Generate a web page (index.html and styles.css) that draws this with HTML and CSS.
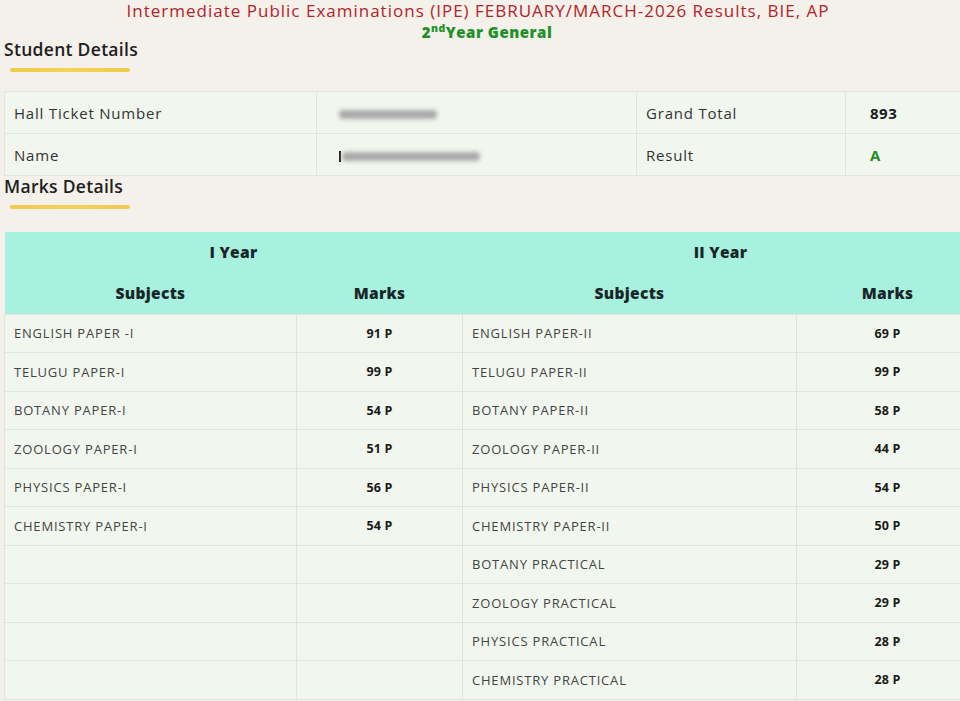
FILE: index.html
```html
<!DOCTYPE html>
<html>
<head>
<meta charset="utf-8">
<link rel="stylesheet" href="styles.css">
</head>
<body>
<div class="page">
  <div class="title">Intermediate Public Examinations (IPE) FEBRUARY/MARCH-2026 Results, BIE, AP</div>
  <div class="subtitle"><span class="ord">2<span class="sup">nd</span></span>Year General</div>

  <h2 class="section">Student Details</h2>
  <div class="underline"></div>
  <table class="details">
    <colgroup><col class="c1"><col class="c2"><col class="c3"><col class="c4"></colgroup>
    <tr>
      <td>Hall Ticket Number</td>
      <td class="val"><span class="blur b1"></span></td>
      <td>Grand Total</td>
      <td class="val strong">893</td>
    </tr>
    <tr>
      <td>Name</td>
      <td class="val"><span class="cursor"></span><span class="blur b2"></span></td>
      <td>Result</td>
      <td class="val strong pass">A</td>
    </tr>
  </table>

  <h2 class="section section2">Marks Details</h2>
  <div class="underline"></div>
  <table class="marks">
    <colgroup><col class="m1"><col class="m2"><col class="m3"><col class="m4"></colgroup>
    <thead>
      <tr class="h1"><th colspan="2">I Year</th><th colspan="2">II Year</th></tr>
      <tr class="h2"><th>Subjects</th><th>Marks</th><th>Subjects</th><th>Marks</th></tr>
    </thead>
    <tbody>
      <tr><td>ENGLISH PAPER -I</td><td class="mk">91 P</td><td>ENGLISH PAPER-II</td><td class="mk">69 P</td></tr>
      <tr><td>TELUGU PAPER-I</td><td class="mk">99 P</td><td>TELUGU PAPER-II</td><td class="mk">99 P</td></tr>
      <tr><td>BOTANY PAPER-I</td><td class="mk">54 P</td><td>BOTANY PAPER-II</td><td class="mk">58 P</td></tr>
      <tr><td>ZOOLOGY PAPER-I</td><td class="mk">51 P</td><td>ZOOLOGY PAPER-II</td><td class="mk">44 P</td></tr>
      <tr><td>PHYSICS PAPER-I</td><td class="mk">56 P</td><td>PHYSICS PAPER-II</td><td class="mk">54 P</td></tr>
      <tr><td>CHEMISTRY PAPER-I</td><td class="mk">54 P</td><td>CHEMISTRY PAPER-II</td><td class="mk">50 P</td></tr>
      <tr><td></td><td></td><td>BOTANY PRACTICAL</td><td class="mk">29 P</td></tr>
      <tr><td></td><td></td><td>ZOOLOGY PRACTICAL</td><td class="mk">29 P</td></tr>
      <tr><td></td><td></td><td>PHYSICS PRACTICAL</td><td class="mk">28 P</td></tr>
      <tr><td></td><td></td><td>CHEMISTRY PRACTICAL</td><td class="mk">28 P</td></tr>
    </tbody>
  </table>
</div>
</body>
</html>
```

FILE: styles.css
```css
html, body {
  margin: 0;
  padding: 0;
  background: #f4f0ea;
  overflow: hidden;
}
body {
  font-family: "Open Sans", "Liberation Sans", sans-serif;
  color: #222;
}
.page {
  width: 1000px;
  padding: 0 0 0 4px;
}
.title {
  width: 948px;
  text-align: center;
  color: #b3232b;
  font-size: 17px;
  letter-spacing: 1px;
  line-height: 18px;
  padding-top: 2px;
  white-space: nowrap;
}
.subtitle {
  width: 966px;
  text-align: center;
  color: #22902a;
  font-weight: 800;
  font-size: 15px;
  line-height: 16px;
  letter-spacing: 0.5px;
  padding-top: 4px;
}
.ord {
  display: inline-flex;
  align-items: flex-start;
}
.sup {
  font-size: 10.5px;
  line-height: 11px;
  margin-top: -1px;
  font-weight: 800;
}
.section {
  margin: 0;
  font-size: 17.5px;
  letter-spacing: 0.3px;
  font-weight: 600;
  color: #1e1e1e;
  line-height: 20px;
}
.section:first-of-type {
  margin-top: -1px;
}
.underline {
  width: 120px;
  height: 4px;
  margin: 9px 0 0 6px;
  border-radius: 3px;
  background: linear-gradient(90deg, #f2c94c 0%, #f6d15a 50%, #f2c94c 100%);
}
table {
  border-collapse: collapse;
  table-layout: fixed;
  background: #f1f7ee;
}
.details {
  width: 1000px;
  margin-top: 19px;
}
.details td {
  border: 1px solid #e1e5dd;
  height: 42px;
  padding: 0 9px;
  font-size: 15px;
  letter-spacing: 0.8px;
  color: #333;
  box-sizing: border-box;
}
.details .c1 { width: 312px; }
.details .c2 { width: 320px; }
.details .c3 { width: 209px; }
.details .c4 { width: 159px; }
.details td.val { padding-left: 22px; }
.details td.strong { font-weight: 700; color: #1a1a1a; padding-left: 24px; letter-spacing: 0.5px; }
.details td.pass { color: #1f8c24; }
.blur {
  display: inline-block;
  height: 9px;
  vertical-align: middle;
  background: #a9a9a9;
  border-radius: 4px;
  filter: blur(2px);
}
.b1 { width: 98px; }
.b2 { width: 138px; margin-left: 1px; }
.cursor {
  display: inline-block;
  width: 2px;
  height: 11px;
  background: #222;
  vertical-align: middle;
}
.marks {
  width: 974px;
  margin-top: 23px;
}
.marks .m1 { width: 292px; }
.marks .m2 { width: 166px; }
.marks .m3 { width: 334px; }
.marks .m4 { width: 182px; }
.marks th {
  background: #a8f1de;
  font-weight: 800;
  color: #18262a;
  font-size: 15.5px;
  letter-spacing: 0.3px;
  text-align: center;
  padding: 0;
  box-sizing: border-box;
}
.marks tr.h1 th { height: 40px; }
.marks tr.h2 th { height: 42px; }
.marks td {
  border: 1px solid #e0e5dc;
  height: 38.5px;
  padding: 0 9px;
  font-size: 13px;
  letter-spacing: 0.8px;
  color: #444;
  box-sizing: border-box;
}
.marks td.mk {
  text-align: center;
  font-weight: 700;
  font-size: 12.5px;
  letter-spacing: 0.2px;
  color: #1a1a1a;
}
```
